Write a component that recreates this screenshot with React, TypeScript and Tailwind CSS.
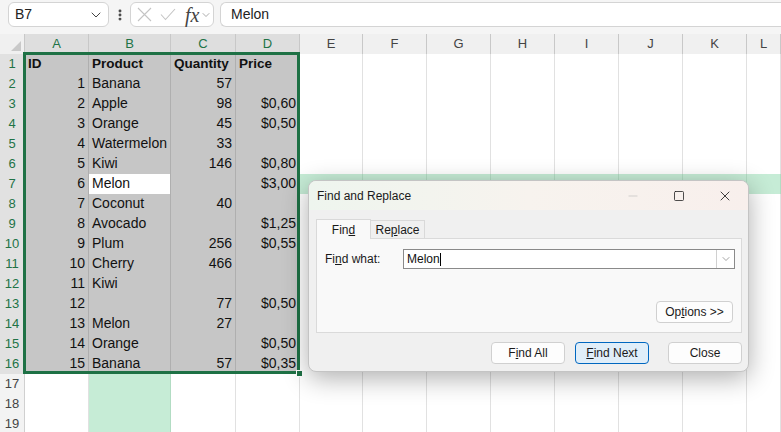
import { ChevronDown, X, EllipsisVertical, Minus, Square } from "lucide-react";

const rows: string[][] = [
  ["ID", "Product", "Quantity", "Price"],
  ["1", "Banana", "57", ""],
  ["2", "Apple", "98", "$0,60"],
  ["3", "Orange", "45", "$0,50"],
  ["4", "Watermelon", "33", ""],
  ["5", "Kiwi", "146", "$0,80"],
  ["6", "Melon", "", "$3,00"],
  ["7", "Coconut", "40", ""],
  ["8", "Avocado", "", "$1,25"],
  ["9", "Plum", "256", "$0,55"],
  ["10", "Cherry", "466", ""],
  ["11", "Kiwi", "", ""],
  ["12", "", "77", "$0,50"],
  ["13", "Melon", "27", ""],
  ["14", "Orange", "", "$0,50"],
  ["15", "Banana", "57", "$0,35"],
];

const cols = ["A", "B", "C", "D", "E", "F", "G", "H", "I", "J", "K", "L"];
const gridCols =
  "grid grid-cols-[25px_64px_82px_65px_64px_63px_64px_64px_64px_64px_64px_64px_1fr]";

function HeaderRow() {
  return (
    <div className={`${gridCols} h-5`}>
      <div className="flex items-end justify-end bg-[#f0f0f0] border-r border-b border-[#c8c8c8] pr-[3px] pb-[3px]">
        <svg width="10" height="10" viewBox="0 0 10 10">
          <polygon points="10,0 10,10 0,10" fill="#c9c9c9" />
        </svg>
      </div>
      {cols.map((c, i) => (
        <div
          key={c}
          className={`flex items-center justify-center text-[13px] border-r border-b border-[#c8c8c8] ${
            i < 4 ? "bg-[#dedede] text-[#217346]" : "bg-[#f0f0f0] text-[#444]"
          }`}
        >
          {c}
        </div>
      ))}
    </div>
  );
}

function DataRow({ n }: { n: number }) {
  const data = rows[n - 1];
  const inSel = n <= 16;
  return (
    <div className={`${gridCols} h-5`}>
      <div
        className={`flex items-center justify-center text-[13px] border-r border-b border-[#d0d0d0] ${
          inSel ? "bg-[#e1e1e1] text-[#217346]" : "bg-[#f3f3f3] text-[#444]"
        }`}
      >
        {n}
      </div>
      {cols.map((c, i) => {
        let bg = "bg-white";
        let border = "border-[#e1e1e1]";
        if (inSel && i < 4) {
          bg = n === 7 && i === 1 ? "bg-white" : "bg-[#c6c6c6]";
          border = "border-[#afafaf]";
        } else if (i === 1 || (n === 7 && i >= 4)) {
          bg = "bg-[#c6ecd6]";
          border = "border-[#b2dcc3]";
        }
        const text = inSel && i < 4 ? data[i] : "";
        const right = n > 1 && i !== 1;
        return (
          <div
            key={c}
            className={`flex items-center border-r border-b ${bg} ${border} ${
              right ? "justify-end pr-[3px]" : "pl-[3px]"
            } ${n === 1 ? "font-bold text-[13.5px]" : "text-[14px]"} text-[#111] whitespace-nowrap overflow-hidden`}
          >
            {text}
          </div>
        );
      })}
    </div>
  );
}

function Btn({ children, primary, w }: { children: React.ReactNode; primary?: boolean; w: string }) {
  return (
    <div
      className={`${w} h-[22px] flex items-center justify-center rounded-[4px] border text-[12px] text-[#1a1a1a] ${
        primary ? "bg-[#e0eef9] border-[#0067c0]" : "bg-[#fdfdfd] border-[#d0d0d0]"
      }`}
    >
      {children}
    </div>
  );
}

export default function App() {
  return (
    <div
      className="relative w-[781px] h-[432px] overflow-hidden bg-white"
      style={{ fontFamily: '"Liberation Sans", Arial, sans-serif' }}
    >
      {/* formula bar */}
      <div className="h-[34px] bg-[#f5f5f5] flex items-start pt-[2px] pl-[8px]">
        <div className="w-[101px] h-[25px] bg-white border border-[#d4d4d4] rounded-[6px] flex items-center pl-[6px] pr-[4px] justify-between">
          <span className="text-[14px] text-[#222]">B7</span>
          <ChevronDown size={16} strokeWidth={1.5} className="text-[#444]" />
        </div>
        <div className="w-[21px] h-[25px] flex items-center justify-center">
          <EllipsisVertical size={14} strokeWidth={3} className="text-[#444]" />
        </div>
        <div className="w-[84px] h-[25px] bg-white border border-[#d4d4d4] rounded-[6px] flex items-center pl-[6px]">
          <svg width="15" height="15" viewBox="0 0 15 15" className="shrink-0">
            <path d="M1 1L14 14M14 1L1 14" stroke="#c4c4c4" strokeWidth="1.1" fill="none" />
          </svg>
          <svg width="16" height="13" viewBox="0 0 16 13" className="shrink-0 ml-[8px]">
            <path d="M1 6.5L5.5 11.5L15 1" stroke="#c4c4c4" strokeWidth="1.1" fill="none" />
          </svg>
          <span
            className="italic text-[20px] text-[#444] leading-none ml-[9px]"
            style={{ fontFamily: '"Liberation Serif", serif' }}
          >
            fx
          </span>
          <ChevronDown size={12} strokeWidth={1.4} className="text-[#888] ml-[1px]" />
        </div>
        <div className="flex-1 h-[25px] ml-[6px] bg-white border border-[#d4d4d4] rounded-l-[6px] border-r-0 flex items-center pl-[10px]">
          <span className="text-[14px] text-[#222]">Melon</span>
        </div>
      </div>

      {/* sheet */}
      <HeaderRow />
      {Array.from({ length: 19 }, (_, i) => (
        <DataRow key={i} n={i + 1} />
      ))}

      {/* selection border */}
      <div className="absolute left-[23px] top-[52px] w-[277px] h-[322px] border-[3px] border-[#1e7145] pointer-events-none" />
      <div className="absolute left-[296px] top-[370px] w-[7px] h-[7px] bg-[#1e7145] border border-white" />

      {/* dialog */}
      <div
        className="absolute left-[308px] top-[180px] w-[441px] h-[192px] rounded-[8px] border border-[#c4c4c4] bg-[#f0f0f0] overflow-hidden flex flex-col shadow-[0_6px_26px_rgba(0,0,0,0.32)]"
        style={{ fontFamily: '"Liberation Sans", Arial, sans-serif' }}
      >
        <div className="h-[29px] flex items-center bg-gradient-to-r from-[#eef5ee] via-[#f7f3ee] to-[#f8efec]">
          <span className="pl-[8px] text-[12px] text-[#1a1a1a] flex-1">Find and Replace</span>
          <div className="w-[46px] h-full flex items-center justify-center">
            <Minus size={14} strokeWidth={1} className="text-[#b8b8b8]" />
          </div>
          <div className="w-[46px] h-full flex items-center justify-center">
            <Square size={12} strokeWidth={1.6} className="text-[#222]" />
          </div>
          <div className="w-[46px] h-full flex items-center justify-center">
            <X size={16} strokeWidth={1.3} className="text-[#222]" />
          </div>
        </div>
        <div className="flex-1 flex flex-col pl-[7px] pr-[6px]">
          <div className="flex items-end h-[28px]">
            <div className="w-[55px] h-[20px] bg-[#f9f9f9] border border-b-0 border-[#d9d9d9] flex items-center justify-center text-[12px] text-[#1a1a1a] relative top-[1px] z-10">
              <span>
                Fin<span className="underline">d</span>
              </span>
            </div>
            <div className="w-[54px] h-[18px] bg-[#f0f0f0] border border-b-0 border-l-0 border-[#d9d9d9] flex items-center justify-center text-[12px] text-[#1a1a1a]">
              <span>
                Re<span className="underline">p</span>lace
              </span>
            </div>
          </div>
          <div className="h-[95px] bg-[#f9f9f9] border border-[#dadada] flex flex-col pl-[8px] pr-[6px] pt-[10px] pb-[9px]">
            <div className="flex items-center h-[20px]">
              <span className="w-[78px] text-[12px] text-[#1a1a1a]">
                Fi<span className="underline">n</span>d what:
              </span>
              <div className="flex-1 h-[20px] bg-white border border-[#8a8a8a] flex items-center">
                <span className="pl-[3px] text-[12px] text-[#111]">Melon</span>
                <span className="w-px h-[13px] bg-black" />
                <div className="ml-auto w-[18px] h-full border-l border-[#d0d0d0] flex items-center justify-center">
                  <ChevronDown size={12} strokeWidth={1.2} className="text-[#666]" />
                </div>
              </div>
            </div>
            <div className="mt-auto flex justify-end pr-[2px]">
              <Btn w="w-[77px]">
                <span>
                  Op<span className="underline">t</span>ions &gt;&gt;
                </span>
              </Btn>
            </div>
          </div>
          <div className="flex justify-end items-center mt-[9px]">
            <Btn w="w-[74px]">
              <span>
                F<span className="underline">i</span>nd All
              </span>
            </Btn>
            <div className="w-[10px]" />
            <Btn w="w-[74px]" primary>
              <span>
                <span className="underline">F</span>ind Next
              </span>
            </Btn>
            <div className="w-[19px]" />
            <Btn w="w-[74px]">Close</Btn>
          </div>
        </div>
      </div>
    </div>
  );
}
